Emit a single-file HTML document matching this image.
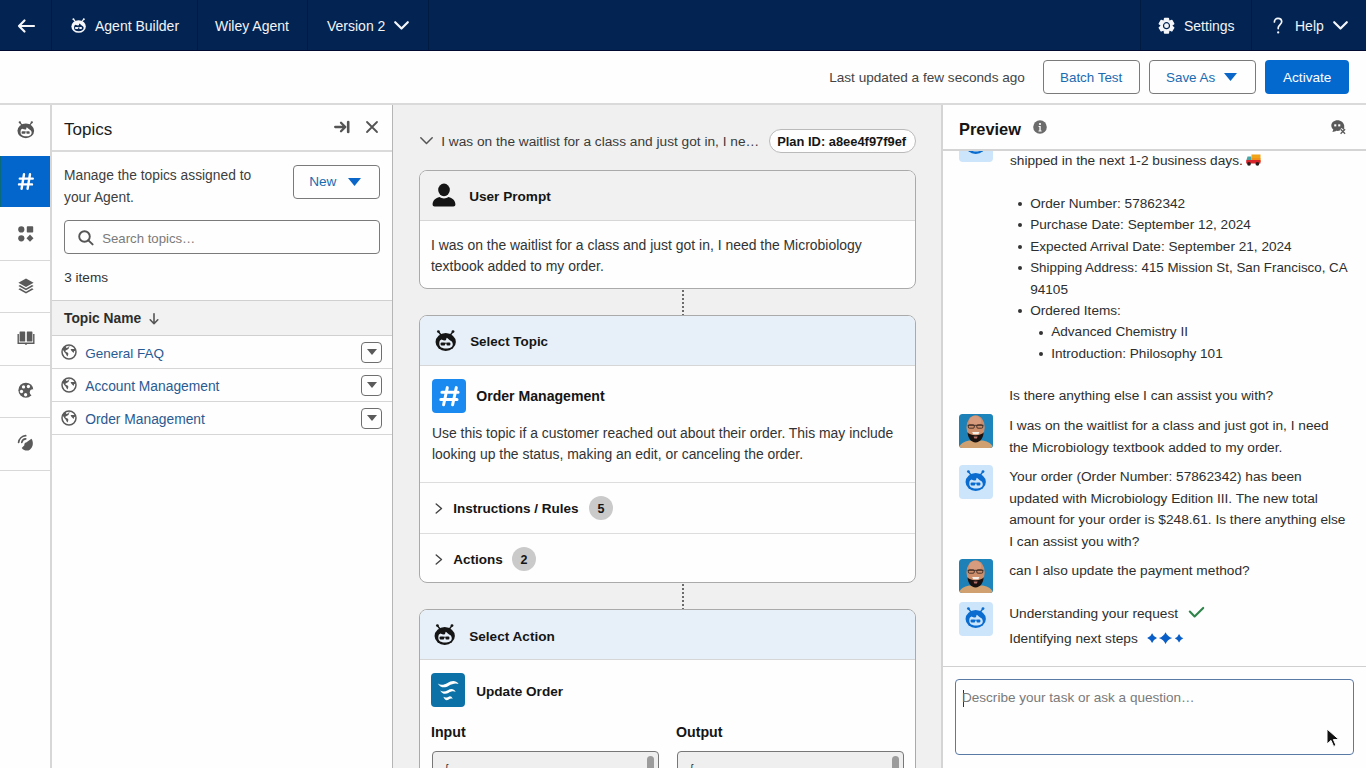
<!DOCTYPE html>
<html><head><meta charset="utf-8">
<style>
*{box-sizing:border-box;margin:0;padding:0}
html,body{width:1366px;height:768px;overflow:hidden;background:#fdfefd;font-family:"Liberation Sans",sans-serif;font-size:14px;color:#2e2e2e}
.a{position:absolute}
.t{position:absolute;white-space:nowrap;font-size:14px;line-height:20px}
.b{font-weight:700}
svg{position:absolute;overflow:visible}
#hdr{position:absolute;left:0;top:0;width:1366px;height:51px;background:#032452;border-bottom:1px solid #010a30}
#hdr .t{color:#f2f4f8}
.vs{position:absolute;top:0;width:1px;height:50px;background:#011a40}
#bar2{position:absolute;z-index:5;left:0;top:51px;width:1366px;height:53.5px;background:#fdfefd;border-bottom:2px solid #d9dad9}
.btn{position:absolute;border:1px solid #7a7a7a;border-radius:4px;background:#fdfefd}
.blue{color:#1b6bb3}
#rail{position:absolute;left:0;top:103px;width:50px;height:665px;background:#fdfefd}
.rs{position:absolute;left:0;width:50px;height:1px;background:#d8d8d8}
#topics{position:absolute;left:52px;top:103px;width:340px;height:665px;background:#fdfefd}
#center{position:absolute;left:393px;top:103px;width:548px;height:665px;background:#eff0ef}
#preview{position:absolute;left:943px;top:103px;width:423px;height:665px;background:#fdfefd}
.card{position:absolute;left:419px;width:497px;border:1px solid #a9aaa9;border-radius:8px;background:#fdfefd;overflow:hidden}
.ch{position:absolute;left:0;top:0;width:100%;height:50px;border-bottom:1px solid #d5d6d5}
.dots{position:absolute;left:682px;width:2px;background:repeating-linear-gradient(to bottom,#6b6b6b 0 2px,transparent 2px 4px)}
</style></head><body>
<svg width="0" height="0" style="position:absolute"><defs>
<symbol id="agent" viewBox="2.5 2.5 21.5 21.5"><g fill="currentColor"><ellipse cx="13.2" cy="14.5" rx="10.15" ry="8.9"/><path d="M5.9 4.1L8.7 7.7M20.5 4.1L17.7 7.7" stroke="currentColor" stroke-width="1.5"/><circle cx="5.9" cy="4.1" r="1.4"/><circle cx="20.5" cy="4.1" r="1.4"/></g><path style="fill:var(--bg)" d="M6.8 16.6C6.8 14.6 7.1 13.4 7.5 12.9L9 12C10.5 12.9 12.2 13.1 13.6 12.8 13.6 11.7 13.9 10.7 14.4 10.2 15.5 11.2 16.7 12.1 17.6 12.9 19.1 13.4 20.3 14.8 20.3 16.7 20.3 19.6 17.3 21.1 13.5 21.1 9.7 21.1 6.8 19.6 6.8 16.6Z"/><g fill="currentColor"><rect x="8.1" y="15" width="4.6" height="3.1" rx="1.1"/><rect x="14" y="15" width="3.9" height="3.1" rx="1.1"/><path d="M12.4 15.7H14.3" stroke="currentColor" stroke-width="0.9"/></g></symbol>
</defs></svg>

<!-- HEADER -->
<div id="hdr">
  <div class="vs" style="left:51px"></div>
  <div class="vs" style="left:197px"></div>
  <div class="vs" style="left:307px"></div>
  <div class="vs" style="left:428px"></div>
  <div class="vs" style="left:1140px"></div>
  <div class="vs" style="left:1251px"></div>
  <!-- back arrow -->
  <svg style="left:17px;top:19px" width="18" height="14" viewBox="0 0 18 14"><path d="M17 7H2M7.5 1.5L2 7l5.5 5.5" fill="none" stroke="#f4f6fa" stroke-width="2.2" stroke-linecap="round" stroke-linejoin="round"/></svg>
  <!-- agent icon -->
  <svg style="left:70.5px;top:17.8px;color:#f4f6fa;--bg:#032452" width="15.3" height="15.3" viewBox="0 0 21.5 21.5"><use href="#agent"/></svg>
  <div class="t" style="left:95px;top:16px">Agent Builder</div>
  <div class="t" style="left:215px;top:16px">Wiley Agent</div>
  <div class="t" style="left:327px;top:16px">Version 2</div>
  <svg style="left:394px;top:21px" width="15" height="9" viewBox="0 0 15 9"><path d="M1.2 1.2l6.3 6.3 6.3-6.3" fill="none" stroke="#f4f6fa" stroke-width="2.2" stroke-linecap="round" stroke-linejoin="round"/></svg>
  <!-- gear -->
  <svg style="left:1157px;top:17px" width="18" height="18" viewBox="0 0 18 18"><g transform="translate(9.5 8.7)"><path d="M-1.95 -7.34 L1.95 -7.34 L2.45 -4.48 L2.65 -4.36 L5.38 -5.36 L7.34 -1.98 L5.10 -0.12 L5.10 0.12 L7.34 1.98 L5.38 5.36 L2.65 4.36 L2.45 4.48 L1.95 7.34 L-1.95 7.34 L-2.45 4.48 L-2.65 4.36 L-5.38 5.36 L-7.34 1.98 L-5.10 0.12 L-5.10 -0.12 L-7.34 -1.98 L-5.38 -5.36 L-2.65 -4.36 L-2.45 -4.48Z" fill="#f4f6fa" stroke="#f4f6fa" stroke-width="1.2" stroke-linejoin="round"/><circle r="3" fill="none" stroke="#032452" stroke-width="1.2"/></g></svg>
  <div class="t" style="left:1184px;top:16px">Settings</div>
  <svg style="left:1270px;top:16px" width="16" height="20" viewBox="0 0 16 20"><path d="M4.4 6C4.4 3.6 6.1 2.3 8 2.3S11.7 3.5 11.7 5.8C11.7 8.3 8.2 8.8 8.2 11.8V12.6" fill="none" stroke="#f4f6fa" stroke-width="1.7" stroke-linecap="round"/><circle cx="8.2" cy="16.4" r="1.15" fill="#f4f6fa"/></svg>
  <div class="t" style="left:1295px;top:16px">Help</div>
  <svg style="left:1333px;top:21px" width="15" height="9" viewBox="0 0 15 9"><path d="M1.2 1.2l6.3 6.3 6.3-6.3" fill="none" stroke="#f4f6fa" stroke-width="2.2" stroke-linecap="round" stroke-linejoin="round"/></svg>
</div>

<!-- SECOND BAR -->
<div id="bar2">
  <div class="t" style="left:829.2px;top:17.2px;color:#444;font-size:13.6px">Last updated a few seconds ago</div>
  <div class="btn" style="left:1043px;top:9px;width:97px;height:34px"></div>
  <div class="t blue" style="left:1060px;top:17px;font-size:13.4px">Batch Test</div>
  <div class="btn" style="left:1149px;top:9px;width:107px;height:34px"></div>
  <div class="t blue" style="left:1166px;top:17px;font-size:13.4px">Save As</div>
  <svg style="left:1224px;top:22px" width="13" height="8" viewBox="0 0 13 8"><path d="M0 0h13L6.5 8z" fill="#0a66c8"/></svg>
  <div class="a" style="left:1265px;top:9px;width:84px;height:34px;background:#0369cf;border-radius:4px"></div>
  <div class="t" style="left:1283px;top:17px;color:#fff;font-size:13.6px">Activate</div>
</div>

<!-- LEFT RAIL -->
<div id="rail">
    <div class="a" style="left:0;top:52.7px;width:50px;height:51px;background:#0366cc;border-left:1px solid #0b6a7a"></div>
  <div class="rs" style="top:156.5px"></div>
  <div class="rs" style="top:209.2px"></div>
  <div class="rs" style="top:261.6px"></div>
  <div class="rs" style="top:313.8px"></div>
  <div class="rs" style="top:366.8px"></div>
  <!-- agent icon gray -->
  <svg style="left:16.8px;top:18.3px;color:#555555;--bg:#fdfefd" width="17.7" height="17.7" viewBox="0 0 21.5 21.5"><use href="#agent"/></svg>
  <!-- hash -->
  <svg style="left:18px;top:70px" width="16" height="17" viewBox="0 0 16 17"><path d="M6 1.2L3.6 15.8M12 1.2L9.6 15.8M1.8 5.6h13M1 11.4h13" fill="none" stroke="#fff" stroke-width="2.4" stroke-linecap="round"/></svg>
  <!-- grid -->
  <svg style="left:18px;top:123px" width="16" height="16" viewBox="0 0 16 16"><g fill="#5a5a5a"><circle cx="3.3" cy="3.4" r="3.1"/><rect x="8.8" y="0.3" width="6.4" height="6.2" rx="0.8"/><circle cx="3.3" cy="12.3" r="3.1"/><path d="M12 8.6l3.5 3.6-3.5 3.6-3.5-3.6z"/></g></svg>
  <!-- layers -->
  <svg style="left:18px;top:175px" width="16" height="16" viewBox="0 0 16 16"><g fill="#5a5a5a"><path d="M8 .5l7.6 4.3L8 9.1 .4 4.8z"/><path d="M.4 8l1.6-.9L8 10.5l6-3.4 1.6.9L8 12.3z"/><path d="M.4 11.2l1.6-.9L8 13.7l6-3.4 1.6.9L8 15.5z"/></g></svg>
  <!-- book -->
  <svg style="left:17px;top:228px" width="18" height="14" viewBox="0 0 18 14"><g fill="#5a5a5a"><rect x="2.6" y="0.5" width="5.6" height="10" rx="0.6"/><rect x="9.8" y="0.5" width="5.6" height="10" rx="0.6"/><path d="M0.5 3h1.4v8.6h14.2V3h1.4v10H10.2l-.6.8h-1.2l-.6-.8H.5z"/></g></svg>
  <!-- palette -->
  <svg style="left:14px;top:273px" width="24" height="24" viewBox="0 0 24 24"><circle cx="11.9" cy="14.15" r="7.5" fill="#5a5a5a"/><circle cx="18.9" cy="16.3" r="3.1" fill="#fdfefd"/><g fill="#fdfefd"><circle cx="9.5" cy="10.9" r="1.65"/><circle cx="14.4" cy="10.5" r="1.65"/><circle cx="7.5" cy="15.5" r="1.65"/><circle cx="11.6" cy="18.75" r="1.65"/></g></svg>
  <!-- signal -->
  <svg style="left:14px;top:327px" width="24" height="24" viewBox="0 0 24 24"><g fill="none" stroke="#5a5a5a" stroke-width="1.7" stroke-linecap="round"><path d="M4.6 12.4A7.6 7.6 0 0 1 11.7 5.7"/><path d="M7.8 12.4A4.3 4.3 0 0 1 11.7 8.9"/></g><path fill="#5a5a5a" d="M7.7 17.9L10.4 15.2C10.1 13.8 10.7 12.6 12.2 12.4L17.4 8.7C19.6 11.3 19.6 17 15.8 19.7 13.4 21.3 9.9 20.6 7.7 17.9Z"/></svg>
</div>
<div class="a" style="left:50px;top:103px;width:2px;height:665px;background:#d6d7d6"></div>

<!-- TOPICS -->
<div id="topics">
  <div class="t" style="left:12px;top:16.8px;font-size:17px;color:#1c1c1c">Topics</div>
  <svg style="left:282px;top:18px" width="16" height="12" viewBox="0 0 16 12"><g fill="none" stroke="#545454" stroke-width="2.3" stroke-linecap="round" stroke-linejoin="round"><path d="M1.2 6h10M7 1.7L11.3 6 7 10.3"/><path d="M14.2 1.1v9.8" stroke-width="2.6"/></g></svg>
  <svg style="left:314px;top:18px" width="12" height="12" viewBox="0 0 12 12"><path d="M1 1l10 10M11 1L1 11" stroke="#545454" stroke-width="1.8" stroke-linecap="round"/></svg>
  <div class="a" style="left:0;top:47px;width:340px;height:2px;background:#d9dad9"></div>
  <div class="t" style="left:12px;top:62.3px;line-height:21.3px;color:#3e3e3e;font-size:13.8px">Manage the topics assigned to<br>your Agent.</div>
  <div class="btn" style="left:241px;top:62px;width:87px;height:34px"></div>
  <div class="t blue" style="left:257.2px;top:69px;font-size:13.6px">New</div>
  <svg style="left:296px;top:75px" width="13" height="8" viewBox="0 0 13 8"><path d="M0 0h13L6.5 8z" fill="#0a66c8"/></svg>
  <div class="btn" style="left:12px;top:117px;width:316px;height:34px"></div>
  <svg style="left:26px;top:127px" width="16" height="15" viewBox="0 0 16 15"><circle cx="6.5" cy="6.5" r="5.3" fill="none" stroke="#555" stroke-width="1.9"/><path d="M10.4 10.4l4.2 4" stroke="#555" stroke-width="2" stroke-linecap="round"/></svg>
  <div class="t" style="left:50.2px;top:125.5px;color:#7a7a7a;font-size:13.2px">Search topics…</div>
  <div class="t" style="left:12.2px;top:165.4px;color:#333;font-size:13.6px">3 items</div>
  <div class="a" style="left:0;top:197px;width:340px;height:36px;background:#f1f2f1;border-top:1px solid #cfd0cf;border-bottom:1px solid #cfd0cf"></div>
  <div class="t b" style="left:12px;top:206px;color:#2e2e2e;font-size:13.8px">Topic Name</div>
  <svg style="left:97px;top:209.5px" width="10" height="12" viewBox="0 0 10 12"><path d="M5 .8v10M1.2 6.8l3.8 3.9 3.8-3.9" fill="none" stroke="#555" stroke-width="1.6" stroke-linecap="round" stroke-linejoin="round"/></svg>
  <div class="a" style="left:0;top:265px;width:340px;height:1px;background:#d5d6d5"></div>
  <div class="a" style="left:0;top:298px;width:340px;height:1px;background:#d5d6d5"></div>
  <div class="a" style="left:0;top:331px;width:340px;height:1px;background:#d5d6d5"></div>
  <div class="t" style="left:33.2px;top:240.5px;color:#2a5a92;font-size:13.5px">General FAQ</div>
  <div class="t" style="left:33.2px;top:273.5px;color:#2a5a92;font-size:13.8px">Account Management</div>
  <div class="t" style="left:33.2px;top:306.5px;color:#2a5a92;font-size:13.8px">Order Management</div>
  <svg style="left:9px;top:241px" width="16" height="16" viewBox="0 0 16 16"><circle cx="8" cy="8" r="7" fill="none" stroke="#5a5a5a" stroke-width="1.5"/><path fill="#5a5a5a" d="M1.2 5.6C1.9 4 3 2.8 4.3 2.1L5.4 3.9 7.5 3.3C7.9 3 7.8 2.4 7.6 1.7L8.6 1.8 7.8 4.3C7.4 5.3 6.3 5.6 5.6 6.1 5 6.4 4.8 6.3 4.4 7.2 4.6 8 5.8 8 6.6 8.6 7.6 9.4 7.5 10.5 6.9 11.4L6.6 12.6C6 12 5.3 10.9 5 10 4.6 9 3.5 8.4 3 7.4 2.6 6.6 1.8 6.2 1.2 5.6ZM9.6 5.1H13.8C14.3 5.6 14.6 6.2 14.8 6.8L13.2 6.9 12.6 8.9C12.1 8.6 11.6 8 11.1 7.6L10.2 6.4Z"/></svg>
  <svg style="left:9px;top:274px" width="16" height="16" viewBox="0 0 16 16"><circle cx="8" cy="8" r="7" fill="none" stroke="#5a5a5a" stroke-width="1.5"/><path fill="#5a5a5a" d="M1.2 5.6C1.9 4 3 2.8 4.3 2.1L5.4 3.9 7.5 3.3C7.9 3 7.8 2.4 7.6 1.7L8.6 1.8 7.8 4.3C7.4 5.3 6.3 5.6 5.6 6.1 5 6.4 4.8 6.3 4.4 7.2 4.6 8 5.8 8 6.6 8.6 7.6 9.4 7.5 10.5 6.9 11.4L6.6 12.6C6 12 5.3 10.9 5 10 4.6 9 3.5 8.4 3 7.4 2.6 6.6 1.8 6.2 1.2 5.6ZM9.6 5.1H13.8C14.3 5.6 14.6 6.2 14.8 6.8L13.2 6.9 12.6 8.9C12.1 8.6 11.6 8 11.1 7.6L10.2 6.4Z"/></svg>
  <svg style="left:9px;top:307px" width="16" height="16" viewBox="0 0 16 16"><circle cx="8" cy="8" r="7" fill="none" stroke="#5a5a5a" stroke-width="1.5"/><path fill="#5a5a5a" d="M1.2 5.6C1.9 4 3 2.8 4.3 2.1L5.4 3.9 7.5 3.3C7.9 3 7.8 2.4 7.6 1.7L8.6 1.8 7.8 4.3C7.4 5.3 6.3 5.6 5.6 6.1 5 6.4 4.8 6.3 4.4 7.2 4.6 8 5.8 8 6.6 8.6 7.6 9.4 7.5 10.5 6.9 11.4L6.6 12.6C6 12 5.3 10.9 5 10 4.6 9 3.5 8.4 3 7.4 2.6 6.6 1.8 6.2 1.2 5.6ZM9.6 5.1H13.8C14.3 5.6 14.6 6.2 14.8 6.8L13.2 6.9 12.6 8.9C12.1 8.6 11.6 8 11.1 7.6L10.2 6.4Z"/></svg>
  <div class="btn" style="left:309px;top:239px;width:21px;height:21px;border-color:#6e6e6e"></div>
  <div class="btn" style="left:309px;top:272px;width:21px;height:21px;border-color:#6e6e6e"></div>
  <div class="btn" style="left:309px;top:305px;width:21px;height:21px;border-color:#6e6e6e"></div>
  <svg style="left:315px;top:246px" width="10" height="6" viewBox="0 0 10 6"><path d="M0 0h10L5 6z" fill="#5a5a5a"/></svg>
  <svg style="left:315px;top:279px" width="10" height="6" viewBox="0 0 10 6"><path d="M0 0h10L5 6z" fill="#5a5a5a"/></svg>
  <svg style="left:315px;top:312px" width="10" height="6" viewBox="0 0 10 6"><path d="M0 0h10L5 6z" fill="#5a5a5a"/></svg>
</div>
<div class="a" style="left:392px;top:103px;width:1px;height:665px;background:#b4b5b4"></div>

<!-- CENTER -->
<div id="center"></div>
<svg style="left:420px;top:137px" width="13" height="8" viewBox="0 0 13 8"><path d="M.8.8l5.7 5.7L12.2.8" fill="none" stroke="#555" stroke-width="1.5" stroke-linecap="round" stroke-linejoin="round"/></svg>
<div class="t" style="left:441.2px;top:132.4px;color:#3a3a3a;font-size:13.7px">I was on the waitlist for a class and just got in, I ne…</div>
<div class="a" style="left:769px;top:129px;width:147px;height:24px;border:1px solid #b9bab9;border-radius:12px;background:#fdfefd"></div>
<div class="t b" style="left:777.2px;top:132px;font-size:12.9px;color:#151515">Plan ID: a8ee4f97f9ef</div>

<!-- card 1 -->
<div class="card" style="top:170px;height:119px">
  <div class="ch" style="background:#f0f1f0"></div>
</div>
<svg style="left:432px;top:183px" width="24" height="24" viewBox="0 0 24 24"><g fill="#151515"><ellipse cx="12" cy="6.9" rx="5.8" ry="6.3"/><path d="M0.6 21.4c0-3.8 3.2-6.5 6.8-7.3 1.2.9 2.9 1.3 4.6 1.3s3.4-.4 4.6-1.3c3.6.8 6.8 3.5 6.8 7.3 0 1.2-.8 2-2 2H2.6c-1.2 0-2-.8-2-2z"/></g></svg>
<div class="t b" style="left:469.2px;top:187px;font-size:13.6px;color:#151515">User Prompt</div>
<div class="t" style="left:431px;top:235px;line-height:21.3px;color:#333;font-size:13.95px">I was on the waitlist for a class and just got in, I need the Microbiology<br>textbook added to my order.</div>
<div class="dots" style="top:290px;height:25px"></div>

<!-- card 2 -->
<div class="card" style="top:315px;height:268px">
  <div class="ch" style="background:#e7f0f9"></div>
  <div class="a" style="left:0;top:166px;width:100%;height:1px;background:#dcdddc"></div>
  <div class="a" style="left:0;top:217px;width:100%;height:1px;background:#dcdddc"></div>
</div>
<svg style="left:434.5px;top:329.5px;color:#151515;--bg:#e7f0f9" width="21.5" height="21.5" viewBox="0 0 21.5 21.5"><use href="#agent"/></svg>
<div class="t b" style="left:470.2px;top:332px;font-size:13.4px;color:#151515">Select Topic</div>
<div class="a" style="left:432px;top:379px;width:34px;height:34px;background:#1a8af0;border-radius:4px"></div>
<svg style="left:439px;top:386px" width="21" height="21" viewBox="0 0 21 21"><path d="M8.3 1.6L4.6 18.8M17.3 1.6L13.6 18.8M2.9 6.2h16.2M1.8 13.4h16.2" fill="none" stroke="#fff" stroke-width="3" stroke-linecap="round"/></svg>
<div class="t b" style="left:476.2px;top:386.2px;font-size:14.1px;color:#151515">Order Management</div>
<div class="t" style="left:432px;top:423px;line-height:21px;color:#333;font-size:13.92px">Use this topic if a customer reached out about their order. This may include<br>looking up the status, making an edit, or canceling the order.</div>
<svg style="left:435px;top:503px" width="8" height="11" viewBox="0 0 8 11"><path d="M1.2 1l5.3 4.5L1.2 10" fill="none" stroke="#444" stroke-width="1.4" stroke-linecap="round" stroke-linejoin="round"/></svg>
<div class="t b" style="left:453.2px;top:499px;font-size:13.5px;color:#151515">Instructions / Rules</div>
<div class="a" style="left:589px;top:496px;width:24px;height:24px;border-radius:12px;background:#c9cac9"></div>
<div class="t b" style="left:589px;top:499px;width:24px;text-align:center;font-size:12.5px;color:#151515">5</div>
<svg style="left:435px;top:554px" width="8" height="11" viewBox="0 0 8 11"><path d="M1.2 1l5.3 4.5L1.2 10" fill="none" stroke="#444" stroke-width="1.4" stroke-linecap="round" stroke-linejoin="round"/></svg>
<div class="t b" style="left:453.2px;top:550px;font-size:13.5px;color:#151515">Actions</div>
<div class="a" style="left:512px;top:547px;width:24px;height:24px;border-radius:12px;background:#c9cac9"></div>
<div class="t b" style="left:512px;top:550px;width:24px;text-align:center;font-size:12.5px;color:#151515">2</div>
<div class="dots" style="top:584px;height:25px"></div>

<!-- card 3 -->
<div class="card" style="top:609px;height:180px">
  <div class="ch" style="background:#e7f0f9"></div>
  <div class="a" style="left:12px;top:141px;width:227px;height:40px;border:1px solid #777;border-radius:4px;background:#efefef"></div>
  <div class="a" style="left:227px;top:146px;width:7px;height:20px;border-radius:4px;background:#9c9c9c"></div>
  <div class="a" style="left:257px;top:141px;width:227px;height:40px;border:1px solid #777;border-radius:4px;background:#efefef"></div>
  <div class="a" style="left:472px;top:146px;width:7px;height:20px;border-radius:4px;background:#9c9c9c"></div>
  <div class="t" style="left:25px;top:148px;font-size:11px;color:#333">{</div>
  <div class="t" style="left:270px;top:148px;font-size:11px;color:#333">{</div>
</div>
<svg style="left:433.5px;top:623.8px;color:#151515;--bg:#e7f0f9" width="21.5" height="21.5" viewBox="0 0 21.5 21.5"><use href="#agent"/></svg>
<div class="t b" style="left:469.2px;top:626.5px;font-size:13.6px;color:#151515">Select Action</div>
<div class="a" style="left:431px;top:673px;width:34px;height:34px;background:#0b71a7;border-radius:4px"></div>
<svg style="left:431.4px;top:673.2px" width="34" height="34" viewBox="0 0 34 34"><g fill="#fdfefd"><path d="M6.8 10.4C9.5 12.3 13 12 16.5 9.9 20 7.9 24.5 6.6 27.6 10.9 24.5 9.7 21 10.7 17.8 12.7 14 15.1 9.6 15.2 6.8 10.4Z"/><path d="M9.2 17.4C11.4 18.9 14 18.7 16.8 17.2 19.5 15.7 22.6 15 24.7 18.9 22.4 17.7 20 18.3 17.8 19.7 14.8 21.5 11.2 21.3 9.2 17.4Z"/><path d="M12.4 23.8C14 24.9 15.6 24.7 17.2 23.9 18.8 23.1 20.4 22.8 21.8 26 20.4 25.3 19 25.6 17.8 26.4 15.8 27.7 13.6 27.5 12.4 23.8Z"/></g></svg>
<div class="t b" style="left:476.2px;top:681.5px;font-size:13.6px;color:#151515">Update Order</div>
<div class="t b" style="left:431px;top:722px;font-size:14.2px;color:#151515">Input</div>
<div class="t b" style="left:676px;top:722px;font-size:14.2px;color:#151515">Output</div>
<div class="a" style="left:941px;top:103px;width:2px;height:665px;background:#d3d4d3"></div>

<!-- PREVIEW -->
<div id="preview"></div>
<!-- partial top avatar -->
<div class="a" style="left:959px;top:127.5px;width:34px;height:34px;background:#cce5fa;border-radius:4px"></div>
<svg style="left:965px;top:132.5px;color:#0a6ccf;--bg:#cce5fa" width="21.5" height="21.5" viewBox="0 0 21.5 21.5"><use href="#agent"/></svg>
<!-- preview header -->
<div class="a" style="left:943px;top:103px;width:423px;height:46px;background:#fdfefd"></div>
<div class="a" style="left:943px;top:149px;width:423px;height:2px;background:#d3d4d3"></div>
<div class="t b" style="left:959px;top:118.5px;font-size:16.4px;color:#151515">Preview</div>
<svg style="left:1033px;top:120px" width="14" height="14" viewBox="0 0 14 14"><circle cx="7" cy="7" r="6.8" fill="#6b6b6b"/><circle cx="7" cy="4" r="1.1" fill="#fff"/><path d="M5.6 6h2.1v4.4h.9v1H5.5v-1h.9V7h-.8z" fill="#fff"/></svg>
<svg style="left:1331px;top:120px" width="15" height="14" viewBox="0 0 15 14"><path fill="#5a5a5a" d="M6.5.3C3 .3.3 2.6.3 5.6c0 1.6.8 3 2 4L1.4 12c1.6 0 3-.6 4-1.2.4.1.7.1 1.1.1 1 0 2-.2 2.8-.6L8.8 9.8 10.7 8 12.7 9.9c.2-.4.5-.9.5-1.4V5.6C12.7 2.6 10 .3 6.5.3z"/><rect x="3.2" y="4.3" width="2.1" height="2.1" fill="#fdfefd"/><rect x="7.2" y="4.3" width="2.1" height="2.1" fill="#fdfefd"/><path d="M9.6 9.2l4.5 4.5M14.1 9.2l-4.5 4.5" stroke="#5a5a5a" stroke-width="1.3"/></svg>

<!-- chat -->
<div class="t" style="left:1010px;top:149.5px;line-height:21.5px;color:#2e2e2e;font-size:13.7px">shipped in the next 1-2 business days.</div>
<svg style="left:1246px;top:154px" width="15" height="12" viewBox="0 0 15 12"><rect x="5.5" y="0.5" width="9" height="7.5" fill="#f0a41a"/><rect x="5.5" y="4" width="9" height="4" fill="#f2861a" opacity=".6"/><path d="M0.3 6.5L1.5 2.5h3.8v3.5z" fill="#4aa6a6"/><rect x="0.2" y="6" width="14.3" height="3.6" rx="0.6" fill="#d8252c"/><circle cx="3" cy="9.8" r="1.9" fill="#2a1a1a"/><circle cx="11.4" cy="9.8" r="1.9" fill="#2a1a1a"/></svg>
<div class="a" style="left:1018.4px;top:202.4px;width:3.3px;height:3.3px;border-radius:2px;background:#333"></div>
<div class="a" style="left:1018.4px;top:223.4px;width:3.3px;height:3.3px;border-radius:2px;background:#333"></div>
<div class="a" style="left:1018.4px;top:245.4px;width:3.3px;height:3.3px;border-radius:2px;background:#333"></div>
<div class="a" style="left:1018.4px;top:266.4px;width:3.3px;height:3.3px;border-radius:2px;background:#333"></div>
<div class="a" style="left:1018.4px;top:309.4px;width:3.3px;height:3.3px;border-radius:2px;background:#333"></div>
<div class="a" style="left:1039.4px;top:331.4px;width:3.3px;height:3.3px;border-radius:2px;background:#333"></div>
<div class="a" style="left:1039.4px;top:352.4px;width:3.3px;height:3.3px;border-radius:2px;background:#333"></div>
<div class="t" style="left:1030.2px;top:192.8px;line-height:21.5px;color:#2e2e2e;font-size:13.6px">Order Number: 57862342<br>Purchase Date: September 12, 2024<br>Expected Arrival Date: September 21, 2024<br><span style="font-size:13.35px">Shipping Address: 415 Mission St, San Francisco, CA</span><br>94105<br>Ordered Items:</div>
<div class="t" style="left:1051.2px;top:321px;line-height:21.5px;color:#2e2e2e;font-size:13.6px">Advanced Chemistry II<br>Introduction: Philosophy 101</div>
<div class="t" style="left:1009.2px;top:385px;color:#2e2e2e;font-size:13.7px;line-height:21.5px">Is there anything else I can assist you with?</div>

<!-- user avatar 1 -->
<svg style="left:959px;top:414px" width="34" height="34" viewBox="0 0 34 34"><defs><clipPath id="av1"><rect width="34" height="34" rx="3.5"/></clipPath></defs><g clip-path="url(#av1)"><rect width="34" height="34" fill="#1d80b7"/><rect x="22" width="12" height="34" fill="#2089bf" opacity=".6"/><path d="M0 34C1 29.5 5 27.5 10 26.5h14c5 1 9 3 10 7.5z" fill="#d0a070"/><ellipse cx="16.6" cy="13.6" rx="9.1" ry="12.4" fill="#cd8e6c"/><ellipse cx="16.2" cy="7" rx="6" ry="5" fill="#dca184" opacity=".7"/><path d="M8.5 18.3C8.9 24 12 28.4 16.6 28.4S24.3 24 24.7 18.3C23.2 20 21 21.2 16.6 21.2S10 20 8.5 18.3z" fill="#1a1210"/><path d="M13.2 17.9h7.2l-1 2.4h-5.2z" fill="#f5f0ea"/><path d="M14.6 22.4h4l-.7 2.1h-2.6z" fill="#b5706a"/><g fill="none" stroke="#3d2a22" stroke-width=".9"><path d="M8.6 11.3h15.9"/><rect x="9.3" y="10.8" width="6" height="3.4" rx="1.2"/><rect x="17.8" y="10.8" width="6" height="3.4" rx="1.2"/></g></g></svg>
<div class="t" style="left:1009.2px;top:415px;color:#2e2e2e;font-size:13.7px;line-height:21.5px">I was on the waitlist for a class and just got in, I need<br>the Microbiology textbook added to my order.</div>

<!-- agent avatar 1 -->
<div class="a" style="left:959px;top:465px;width:34px;height:34px;background:#cce5fa;border-radius:4px"></div>
<svg style="left:965px;top:470px;color:#0a6ccf;--bg:#cce5fa" width="21.5" height="21.5" viewBox="0 0 21.5 21.5"><use href="#agent"/></svg>
<div class="t" style="left:1009.2px;top:466px;color:#2e2e2e;font-size:13.7px;line-height:21.5px">Your order (Order Number: 57862342) has been<br>updated with Microbiology Edition III. The new total<br>amount for your order is $248.61. Is there anything else<br>I can assist you with?</div>

<!-- user avatar 2 -->
<svg style="left:959px;top:559px" width="34" height="34" viewBox="0 0 34 34"><g clip-path="url(#av1)"><rect width="34" height="34" fill="#1d80b7"/><rect x="22" width="12" height="34" fill="#2089bf" opacity=".6"/><path d="M0 34C1 29.5 5 27.5 10 26.5h14c5 1 9 3 10 7.5z" fill="#d0a070"/><ellipse cx="16.6" cy="13.6" rx="9.1" ry="12.4" fill="#cd8e6c"/><ellipse cx="16.2" cy="7" rx="6" ry="5" fill="#dca184" opacity=".7"/><path d="M8.5 18.3C8.9 24 12 28.4 16.6 28.4S24.3 24 24.7 18.3C23.2 20 21 21.2 16.6 21.2S10 20 8.5 18.3z" fill="#1a1210"/><path d="M13.2 17.9h7.2l-1 2.4h-5.2z" fill="#f5f0ea"/><path d="M14.6 22.4h4l-.7 2.1h-2.6z" fill="#b5706a"/><g fill="none" stroke="#3d2a22" stroke-width=".9"><path d="M8.6 11.3h15.9"/><rect x="9.3" y="10.8" width="6" height="3.4" rx="1.2"/><rect x="17.8" y="10.8" width="6" height="3.4" rx="1.2"/></g></g></svg>
<div class="t" style="left:1009.2px;top:560px;color:#2e2e2e;font-size:13.7px;line-height:21.5px">can I also update the payment method?</div>

<!-- agent avatar 2 -->
<div class="a" style="left:959px;top:602px;width:34px;height:34px;background:#cce5fa;border-radius:4px"></div>
<svg style="left:965px;top:607px;color:#0a6ccf;--bg:#cce5fa" width="21.5" height="21.5" viewBox="0 0 21.5 21.5"><use href="#agent"/></svg>
<div class="t" style="left:1009.2px;top:603px;color:#2e2e2e;font-size:13.7px;line-height:21.5px">Understanding your request</div>
<svg style="left:1188px;top:606px" width="17" height="13" viewBox="0 0 17 13"><path d="M1.8 5.6l4.8 4.9 8.6-8.6" fill="none" stroke="#2e844a" stroke-width="2.1" stroke-linecap="round" stroke-linejoin="round"/></svg>
<div class="t" style="left:1009.2px;top:628px;color:#2e2e2e;font-size:13.7px;line-height:21.5px">Identifying next steps</div>
<svg style="left:1146px;top:631px" width="39" height="14" viewBox="0 0 39 14"><path fill="#0a5ec8" d="M6.1 2.1999999999999993Q7.47 5.73 11.0 7.1Q7.47 8.47 6.1 12.0Q4.73 8.47 1.1999999999999993 7.1Q4.73 5.73 6.1 2.1999999999999993ZM19.55 1.1999999999999993Q21.41 5.45 26.200000000000003 7.1Q21.41 8.75 19.55 13.0Q17.69 8.75 12.9 7.1Q17.69 5.45 19.55 1.1999999999999993ZM33.05 2.9000000000000004Q34.24 6.03 37.3 7.25Q34.24 8.47 33.05 11.6Q31.86 8.47 28.799999999999997 7.25Q31.86 6.03 33.05 2.9000000000000004Z"/></svg>

<!-- input area -->
<div class="a" style="left:943px;top:666px;width:423px;height:1px;background:#cfd0cf"></div>
<div class="a" style="left:955px;top:679px;width:399px;height:76px;border:1.5px solid #5a7aa6;border-radius:4px;background:#fdfefd"></div>
<div class="a" style="left:963px;top:690px;width:1px;height:17px;background:#333"></div>
<div class="t" style="left:962px;top:688.4px;color:#7a7a7a;font-size:13.55px">Describe your task or ask a question…</div>
<svg style="left:1326px;top:728px" width="16" height="20" viewBox="0 0 16 20"><path d="M1 1v15l4-3.6 2.6 6 2.4-1-2.6-5.8H13z" fill="#111" stroke="#fff" stroke-width="1"/></svg>

</body></html>
